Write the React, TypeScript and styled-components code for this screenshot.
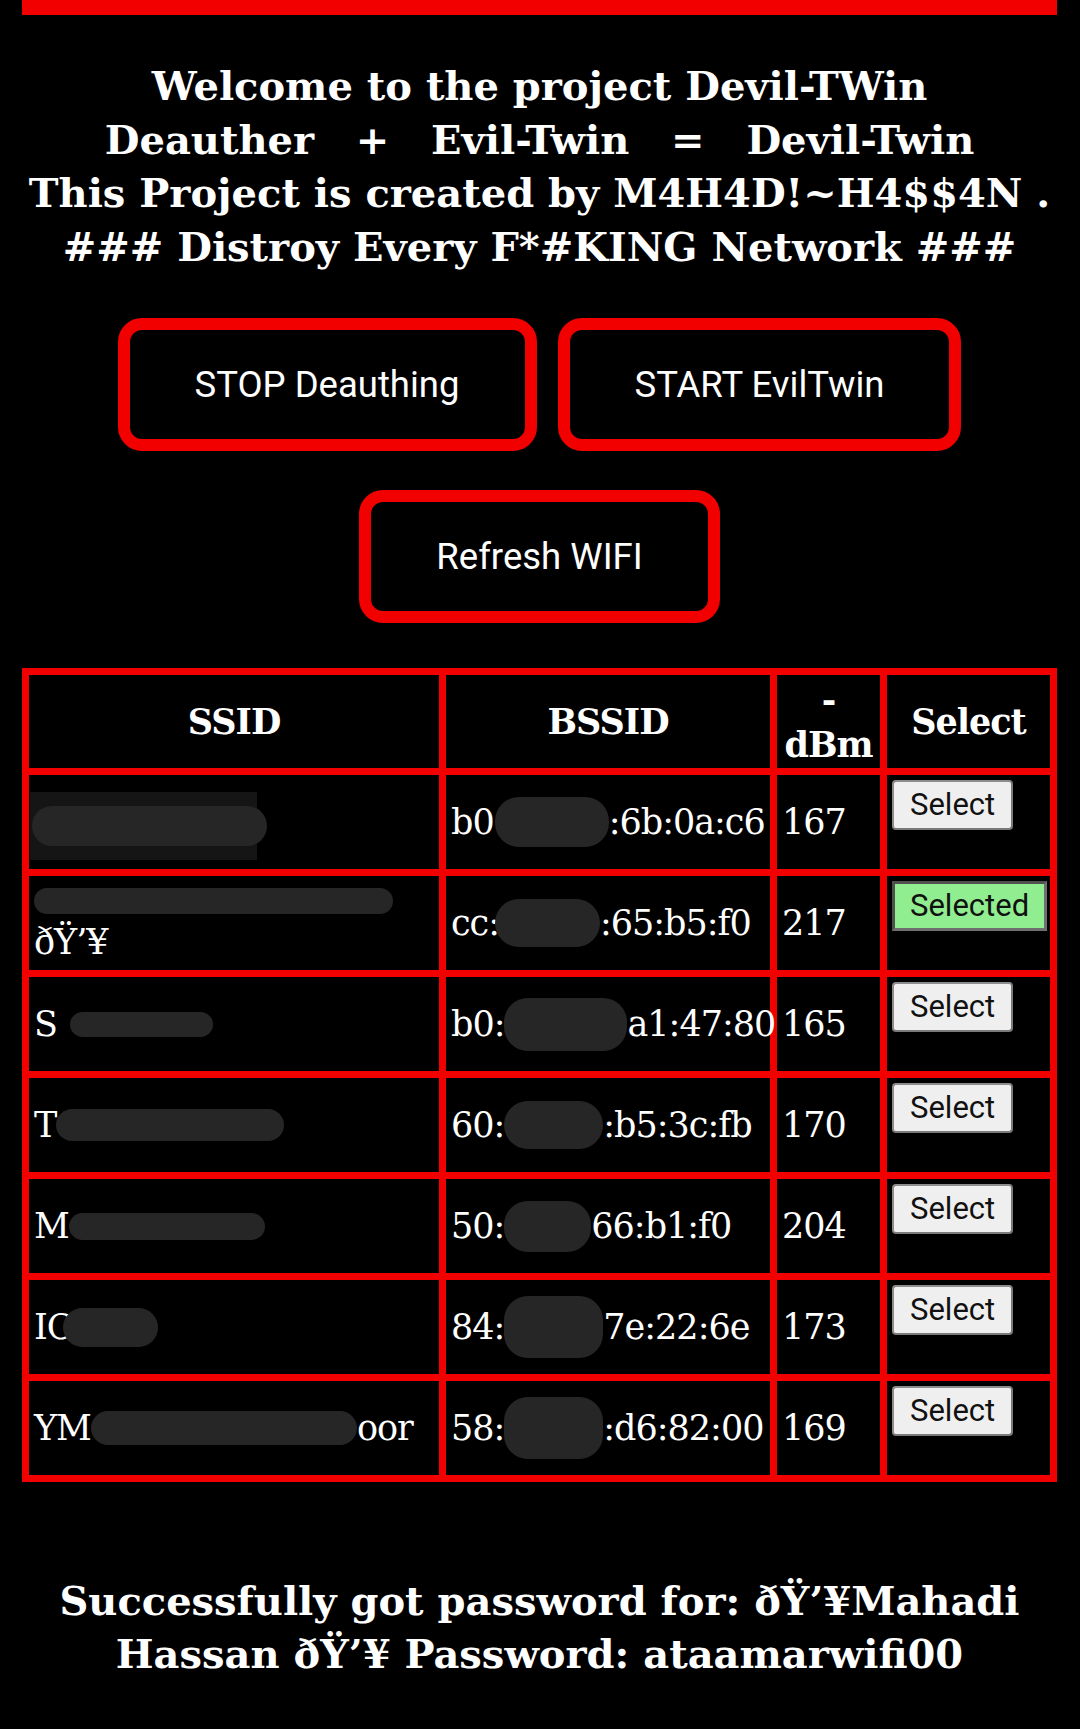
import React from "react";
import styled, { createGlobalStyle } from "styled-components";

const RED = "#f20000";
const BLOT = "#262626";

const GlobalStyle = createGlobalStyle`
  html, body { margin: 0; padding: 0; background: #000; }
  body { color: #fff; font-family: "DejaVu Serif", serif; }
`;

const Page = styled.div`
  width: 1035px;
  margin: 0 0 0 22px;
  padding-bottom: 40px;
  display: flex;
  flex-direction: column;
`;

const TopBar = styled.div`
  height: 15px;
  background: ${RED};
`;

const Title = styled.h1`
  margin: 44px 0 0;
  font-family: "DejaVu Serif", serif;
  font-weight: 700;
  font-size: 40px;
  line-height: 53.5px;
  text-align: center;
`;

const ButtonRow = styled.div<{ $gap: number }>`
  display: flex;
  justify-content: center;
  gap: 21px;
  margin-top: ${(p) => p.$gap}px;
`;

const ActionButton = styled.button`
  background: #000;
  color: #fff;
  border: 12px solid ${RED};
  border-radius: 24px;
  padding: 34px 65px;
  font-family: Roboto, "Liberation Sans", sans-serif;
  font-size: 36.5px;
  line-height: 41px;
  cursor: pointer;
`;

const Table = styled.div`
  margin-top: 45px;
  display: grid;
  grid-template-columns: 410px 324px 103px 163px;
  grid-template-rows: 93px;
  grid-auto-rows: 94px;
  gap: 7px;
  padding: 7px;
  background: ${RED};
`;

const HeadCell = styled.div`
  background: #000;
  padding: 5px;
  display: flex;
  align-items: center;
  justify-content: center;
  text-align: center;
  font-weight: 700;
  font-size: 35px;
  line-height: 45px;
  letter-spacing: -1px;
`;

const Cell = styled.div<{ $top?: boolean; $stack?: boolean }>`
  background: #000;
  padding: 5px;
  display: flex;
  flex-direction: ${(p) => (p.$stack ? "column" : "row")};
  align-items: ${(p) => (p.$top ? "flex-start" : p.$stack ? "flex-start" : "center")};
  justify-content: ${(p) => (p.$stack ? "center" : "flex-start")};
  font-size: 35px;
  line-height: 45px;
  letter-spacing: -1px;
  white-space: nowrap;
  overflow: visible;
`;

const Line = styled.div`
  height: 45px;
  display: flex;
  align-items: center;
`;

const Redact = styled.span<{ $w: number; $h: number; $ml?: number }>`
  display: inline-block;
  flex-shrink: 0;
  width: ${(p) => p.$w}px;
  height: ${(p) => p.$h}px;
  margin-left: ${(p) => p.$ml ?? 0}px;
  background: ${BLOT};
  border-radius: ${(p) => Math.min(p.$h / 2, 24)}px;
`;

const Patch = styled.span`
  display: flex;
  align-items: center;
  flex-shrink: 0;
  width: 227px;
  height: 68px;
  margin-left: -4px;
  margin-top: 8px;
  background: #151515;
`;

const SelectButton = styled.button<{ $selected?: boolean }>`
  font-family: Roboto, "Liberation Sans", sans-serif;
  font-size: 31px;
  line-height: 36px;
  letter-spacing: 0;
  color: #111;
  background: ${(p) => (p.$selected ? "#90ee90" : "#efefef")};
  border: ${(p) => (p.$selected ? "3px" : "2px")} solid;
  border-color: ${(p) =>
    p.$selected ? "#4f4f4f #6f6f6f #6f6f6f #4f4f4f" : "#8c8c8c #7a7a7a #7a7a7a #8c8c8c"};
  border-radius: ${(p) => (p.$selected ? "0" : "4px")};
  padding: ${(p) => (p.$selected ? "4px 15px" : "5px 16px")};
  cursor: pointer;
`;

const Footer = styled.p`
  margin: 92px 0 0;
  font-family: "DejaVu Serif", serif;
  font-weight: 700;
  font-size: 40px;
  line-height: 53px;
  text-align: center;
`;

type Row = {
  ssid: React.ReactNode;
  stack?: boolean;
  pre: string;
  w: number;
  h: number;
  ml?: number;
  post: string;
  dbm: string;
  selected?: boolean;
};

const rows: Row[] = [
  {
    ssid: (
      <Patch>
        <Redact $w={235} $h={40} $ml={2} />
      </Patch>
    ),
    pre: "b0",
    w: 114,
    h: 50,
    ml: 1,
    post: ":6b:0a:c6",
    dbm: "167",
  },
  {
    ssid: (
      <>
        <Line>
          <Redact $w={359} $h={26} />
        </Line>
        <Line>ðŸ’¥</Line>
      </>
    ),
    stack: true,
    pre: "cc:",
    w: 105,
    h: 48,
    ml: -4,
    post: ":65:b5:f0",
    dbm: "217",
    selected: true,
  },
  {
    ssid: (
      <>
        S<Redact $w={143} $h={25} $ml={13} />
      </>
    ),
    pre: "b0:",
    w: 123,
    h: 53,
    post: "a1:47:80",
    dbm: "165",
  },
  {
    ssid: (
      <>
        T<Redact $w={228} $h={32} />
      </>
    ),
    pre: "60:",
    w: 99,
    h: 48,
    post: ":b5:3c:fb",
    dbm: "170",
  },
  {
    ssid: (
      <>
        M<Redact $w={196} $h={27} />
      </>
    ),
    pre: "50:",
    w: 87,
    h: 51,
    post: "66:b1:f0",
    dbm: "204",
  },
  {
    ssid: (
      <>
        IC<Redact $w={95} $h={39} $ml={-10} />
      </>
    ),
    pre: "84:",
    w: 99,
    h: 62,
    post: "7e:22:6e",
    dbm: "173",
  },
  {
    ssid: (
      <>
        YM<Redact $w={266} $h={34} />
        oor
      </>
    ),
    pre: "58:",
    w: 99,
    h: 62,
    post: ":d6:82:00",
    dbm: "169",
  },
];

export default function App() {
  return (
    <>
      <GlobalStyle />
      <Page>
        <TopBar />
        <Title>
          Welcome to the project Devil-TWin
          <br />
          Deauther {"\u00a0"} + {"\u00a0"} Evil-Twin {"\u00a0"} = {"\u00a0"} Devil-Twin
          <br />
          This Project is created by M4H4D!~H4$$4N .
          <br />
          ### Distroy Every F*#KING Network ###
        </Title>
        <ButtonRow $gap={45}>
          <ActionButton>STOP Deauthing</ActionButton>
          <ActionButton>START EvilTwin</ActionButton>
        </ButtonRow>
        <ButtonRow $gap={39}>
          <ActionButton>Refresh WIFI</ActionButton>
        </ButtonRow>
        <Table>
          <HeadCell>SSID</HeadCell>
          <HeadCell>BSSID</HeadCell>
          <HeadCell>
            -<br />
            dBm
          </HeadCell>
          <HeadCell>Select</HeadCell>
          {rows.map((r, i) => (
            <React.Fragment key={i}>
              <Cell $stack={r.stack}>{r.ssid}</Cell>
              <Cell>
                {r.pre}
                <Redact $w={r.w} $h={r.h} $ml={r.ml} />
                {r.post}
              </Cell>
              <Cell>{r.dbm}</Cell>
              <Cell $top>
                <SelectButton $selected={r.selected}>
                  {r.selected ? "Selected" : "Select"}
                </SelectButton>
              </Cell>
            </React.Fragment>
          ))}
        </Table>
        <Footer>
          Successfully got password for: ðŸ’¥Mahadi
          <br />
          Hassan ðŸ’¥ Password: ataamarwifi00
        </Footer>
      </Page>
    </>
  );
}
